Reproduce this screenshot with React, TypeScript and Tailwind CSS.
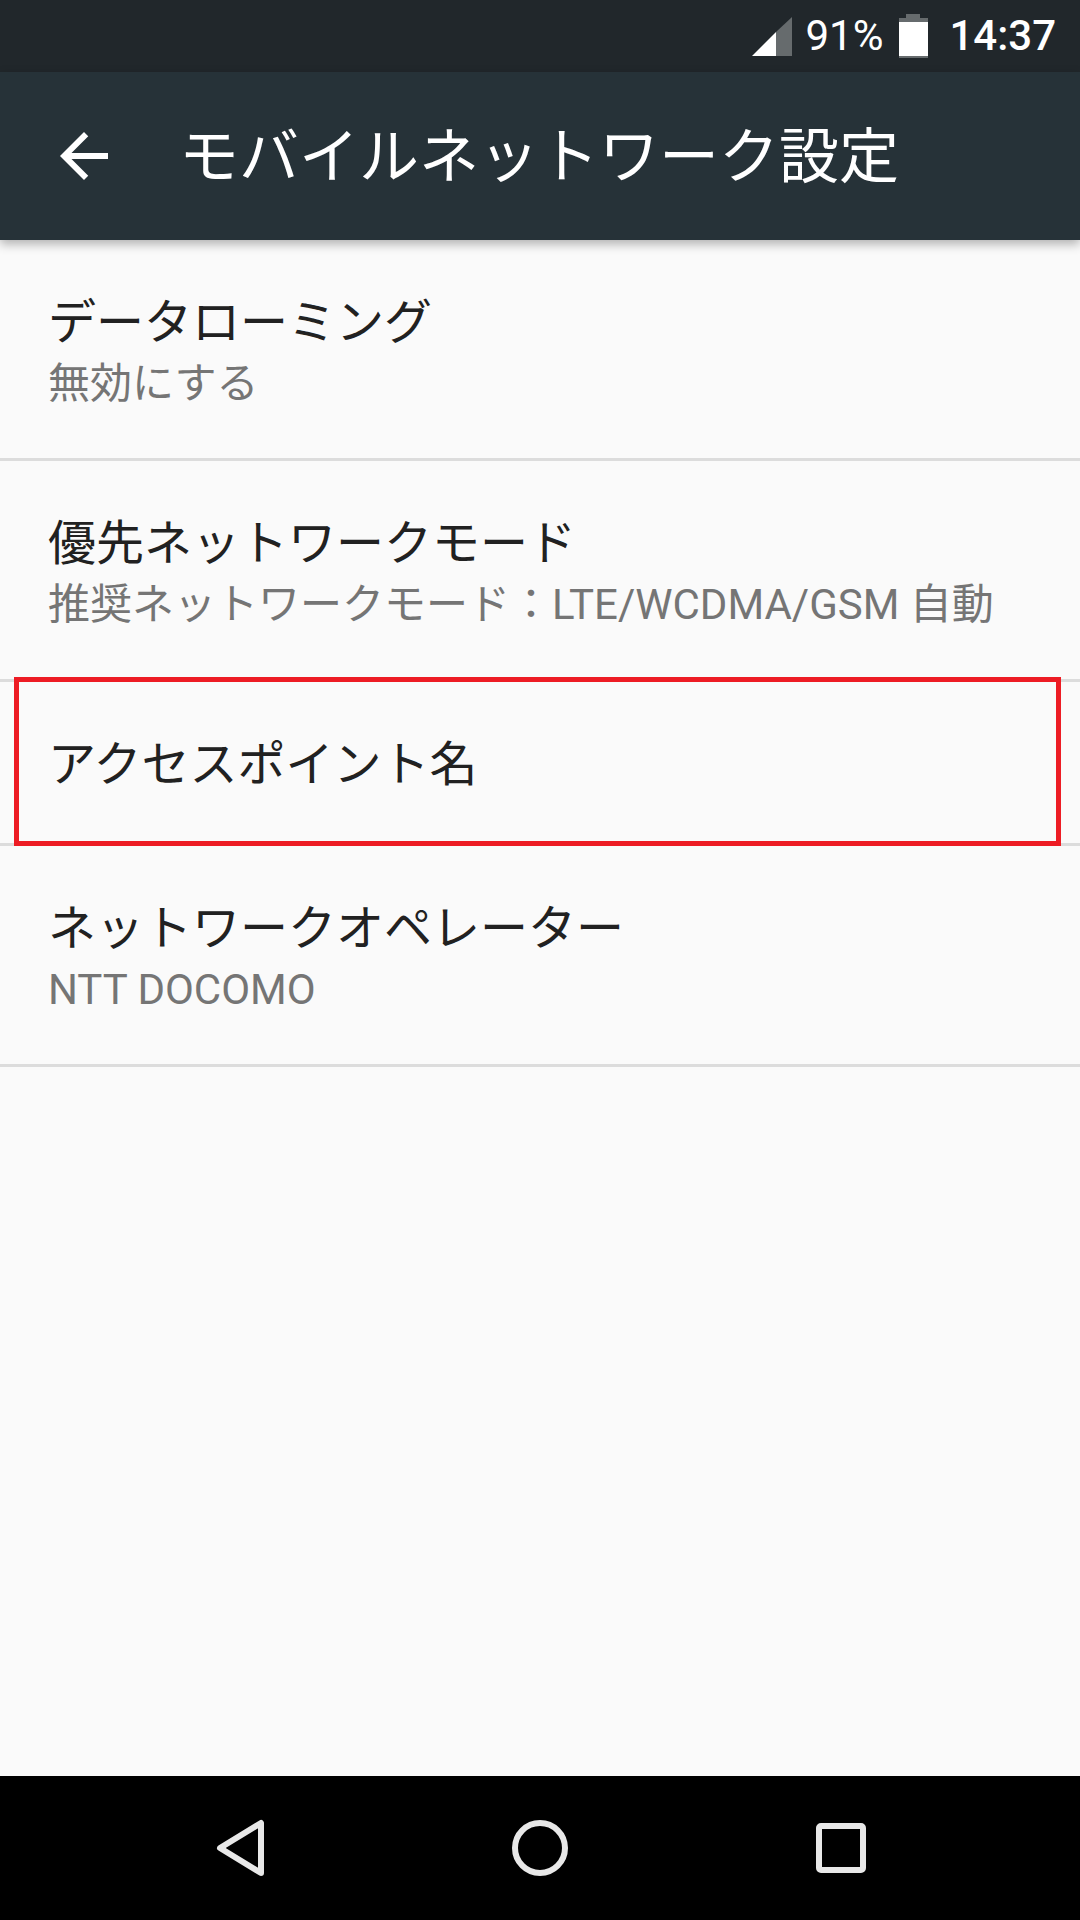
type Row = {
  title: string;
  summary?: string;
};

const ROWS: Row[] = [
  { title: 'データローミング', summary: '無効にする' },
  { title: '優先ネットワークモード', summary: '推奨ネットワークモード：LTE/WCDMA/GSM 自動' },
  { title: 'アクセスポイント名' },
  { title: 'ネットワークオペレーター', summary: 'NTT DOCOMO' },
];

const FONT = "font-['Roboto','Noto_Sans_CJK_JP',sans-serif]";

function StatusBar() {
  return (
    <div className="flex h-[72px] items-center justify-end bg-[#21272b] pr-[24px] text-white">
      <svg width="40" height="39" viewBox="0 0 40 39" className="mr-[13px]">
        <path d="M24 15 L40 0 V39 H24 Z" fill="#666b6d" />
        <path d="M0 39 L24 15 V39 Z" fill="#ffffff" />
      </svg>
      <span className="mr-[16px] text-[42px] leading-none">91%</span>
      <svg width="29" height="44" viewBox="0 0 29 44" className="mr-[21px]">
        <path d="M7 0 H21 V4 H29 V44 H0 V4 H7 Z" fill="#666b6d" />
        <rect x="0" y="8" width="29" height="34" fill="#ffffff" />
      </svg>
      <span className="text-[42px] font-medium leading-none">14:37</span>
    </div>
  );
}

function AppBar() {
  return (
    <div className="relative z-10 flex h-[168px] items-center bg-[#263238] text-white shadow-[0_4px_10px_rgba(0,0,0,0.3)]">
      <svg width="72" height="72" viewBox="0 0 24 24" fill="currentColor" className="ml-[48px] shrink-0">
        <path d="M20 11H7.83l5.59-5.59L12 4l-8 8 8 8 1.41-1.41L7.83 13H20v-2z" />
      </svg>
      <span className="ml-[59px] mt-[4px] text-[60px] leading-none">モバイルネットワーク設定</span>
    </div>
  );
}

function ListRow({ title, summary }: Row) {
  return (
    <div
      className={`flex flex-col justify-center border-b-[3px] border-[#dcdcdc] px-[48px] ${summary ? 'h-[221px] pt-[6px]' : 'h-[164px] pt-[4px]'}`}
    >
      <span className="text-[48px] leading-[62px] text-[#212121]">{title}</span>
      {summary && <span className="mt-[2px] text-[42px] leading-[56px] text-[#757575]">{summary}</span>}
    </div>
  );
}

function NavBar() {
  return (
    <div className="flex h-[144px] items-center bg-black">
      <svg width="1080" height="144" viewBox="0 0 1080 144" fill="none" stroke="#e8e8e8" strokeWidth="6">
        <polygon points="261,47 261,97 220,72" strokeLinejoin="round" />
        <circle cx="540" cy="72" r="25" />
        <rect x="819" y="50" width="44" height="44" rx="2" />
      </svg>
    </div>
  );
}

export default function App() {
  return (
    <div className={`relative flex h-[1920px] w-[1080px] flex-col overflow-hidden bg-[#fafafa] ${FONT}`}>
      <StatusBar />
      <AppBar />
      <div className="flex-1">
        {ROWS.map((row) => (
          <ListRow key={row.title} {...row} />
        ))}
      </div>
      <NavBar />
      {/* red annotation around the APN row */}
      <div className="absolute left-[14px] top-[677px] h-[169px] w-[1047px] border-[5px] border-[#ed1c24]" />
    </div>
  );
}
